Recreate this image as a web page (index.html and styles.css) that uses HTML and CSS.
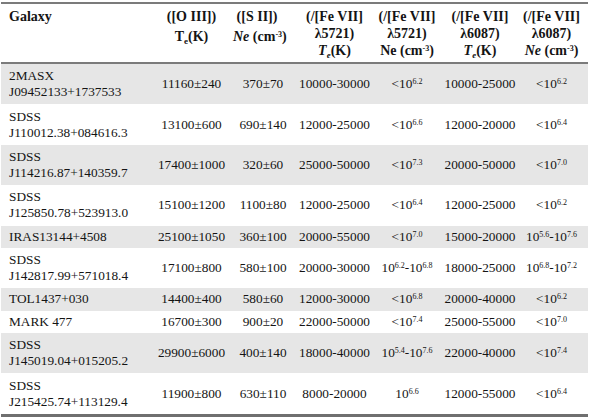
FILE: index.html
```html
<!DOCTYPE html>
<html>
<head>
<meta charset="utf-8">
<link rel="stylesheet" href="styles.css">
</head>
<body>
<table class="tbl">
  <colgroup>
    <col class="c1"><col class="c2"><col class="c3"><col class="c4"><col class="c5"><col class="c6"><col class="c7">
  </colgroup>
  <thead>
    <tr>
      <th class="name">Galaxy</th>
      <th><div>([O III])</div><div class="l2">T<sub>e</sub>(K)</div></th>
      <th class="sii"><div>([S II])</div><div class="l2"><i>Ne</i> (cm<sup>-3</sup>)</div></th>
      <th><div>(/[Fe VII]</div><div>λ5721)</div><div><i>T<sub>e</sub></i>(K)</div></th>
      <th><div>(/[Fe VII]</div><div>λ5721)</div><div>Ne (cm<sup>-3</sup>)</div></th>
      <th><div>(/[Fe VII]</div><div>λ6087)</div><div><i>T<sub>e</sub></i>(K)</div></th>
      <th class="last"><div>(/[Fe VII]</div><div>λ6087)</div><div><i>Ne</i> (cm<sup>-3</sup>)</div></th>
    </tr>
  </thead>
  <tbody>
    <tr class="g">
      <td class="name">2MASX<br>J09452133+1737533</td><td>11160±240</td><td>370±70</td><td>10000-30000</td><td>&lt;10<sup>6.2</sup></td><td>10000-25000</td><td class="last">&lt;10<sup>6.2</sup></td>
    </tr>
    <tr>
      <td class="name">SDSS<br>J110012.38+084616.3</td><td>13100±600</td><td>690±140</td><td>12000-25000</td><td>&lt;10<sup>6.6</sup></td><td>12000-20000</td><td class="last">&lt;10<sup>6.4</sup></td>
    </tr>
    <tr class="g">
      <td class="name">SDSS<br>J114216.87+140359.7</td><td>17400±1000</td><td>320±60</td><td>25000-50000</td><td>&lt;10<sup>7.3</sup></td><td>20000-50000</td><td class="last">&lt;10<sup>7.0</sup></td>
    </tr>
    <tr>
      <td class="name">SDSS<br>J125850.78+523913.0</td><td>15100±1200</td><td>1100±80</td><td>12000-25000</td><td>&lt;10<sup>6.4</sup></td><td>12000-25000</td><td class="last">&lt;10<sup>6.2</sup></td>
    </tr>
    <tr class="g one">
      <td class="name">IRAS13144+4508</td><td>25100±1050</td><td>360±100</td><td>20000-55000</td><td>&lt;10<sup>7.0</sup></td><td>15000-20000</td><td class="last">10<sup>5.6</sup>-10<sup>7.6</sup></td>
    </tr>
    <tr>
      <td class="name">SDSS<br>J142817.99+571018.4</td><td>17100±800</td><td>580±100</td><td>20000-30000</td><td>10<sup>6.2</sup>-10<sup>6.8</sup></td><td>18000-25000</td><td class="last">10<sup>6.8</sup>-10<sup>7.2</sup></td>
    </tr>
    <tr class="g one">
      <td class="name">TOL1437+030</td><td>14400±400</td><td>580±60</td><td>12000-30000</td><td>&lt;10<sup>6.8</sup></td><td>20000-40000</td><td class="last">&lt;10<sup>6.2</sup></td>
    </tr>
    <tr class="one">
      <td class="name">MARK 477</td><td>16700±300</td><td>900±20</td><td>22000-50000</td><td>&lt;10<sup>7.4</sup></td><td>25000-55000</td><td class="last">&lt;10<sup>7.0</sup></td>
    </tr>
    <tr class="g">
      <td class="name">SDSS<br>J145019.04+015205.2</td><td>29900±6000</td><td>400±140</td><td>18000-40000</td><td>10<sup>5.4</sup>-10<sup>7.6</sup></td><td>22000-40000</td><td class="last">&lt;10<sup>7.4</sup></td>
    </tr>
    <tr>
      <td class="name">SDSS<br>J215425.74+113129.4</td><td>11900±800</td><td>630±110</td><td>8000-20000</td><td>10<sup>6.6</sup></td><td>12000-55000</td><td class="last">&lt;10<sup>6.4</sup></td>
    </tr>
  </tbody>
</table>
</body>
</html>
```

FILE: styles.css
```css
html, body {
  margin: 0;
  padding: 0;
  background: #ffffff;
}

body {
  font-family: "Liberation Serif", "Times New Roman", serif;
  color: #141414;
}

.tbl {
  border-collapse: collapse;
  table-layout: fixed;
  width: 587px;
  margin: 2px 0 0 1px;
  font-size: 13.3px;
  border-top: 2px solid #7b7b7b;
  border-bottom: 3px solid #6f6f6f;
}

.c1 { width: 149px; }
.c2 { width: 83px; }
.c3 { width: 60px; }
.c4 { width: 83px; }
.c5 { width: 62px; }
.c6 { width: 84px; }
.c7 { width: 66px; }

.tbl th {
  font-size: 14px;
  font-weight: bold;
  line-height: 17px;
  text-align: center;
  vertical-align: top;
  padding: 4px 0 3px 0;
  white-space: nowrap;
  border-bottom: 2px solid #7b7b7b;
}

.tbl th.name {
  text-align: left;
  padding-left: 8px;
}

.tbl th .l2 {
  margin-top: 3px;
}

.tbl th.sii {
  padding-right: 12px;
}

.tbl th.last,
.tbl td.last {
  padding-right: 7px;
}

.tbl td {
  line-height: 16px;
  padding: 4.2px 0;
  text-align: center;
  vertical-align: middle;
  white-space: nowrap;
}

.tbl td.name {
  text-align: left;
  padding-left: 8px;
}

.tbl tr.one td {
  padding: 3.2px 0;
}

.tbl tr.one td.name {
  padding-left: 8px;
}

.tbl tr.one td.last {
  padding-right: 7px;
}

.tbl tr.g td {
  background: #e6e6e6;
}

sup {
  font-size: 8px;
  line-height: 0;
  vertical-align: 4px;
}

sub {
  font-size: 9px;
  line-height: 0;
  vertical-align: -3px;
}
```
